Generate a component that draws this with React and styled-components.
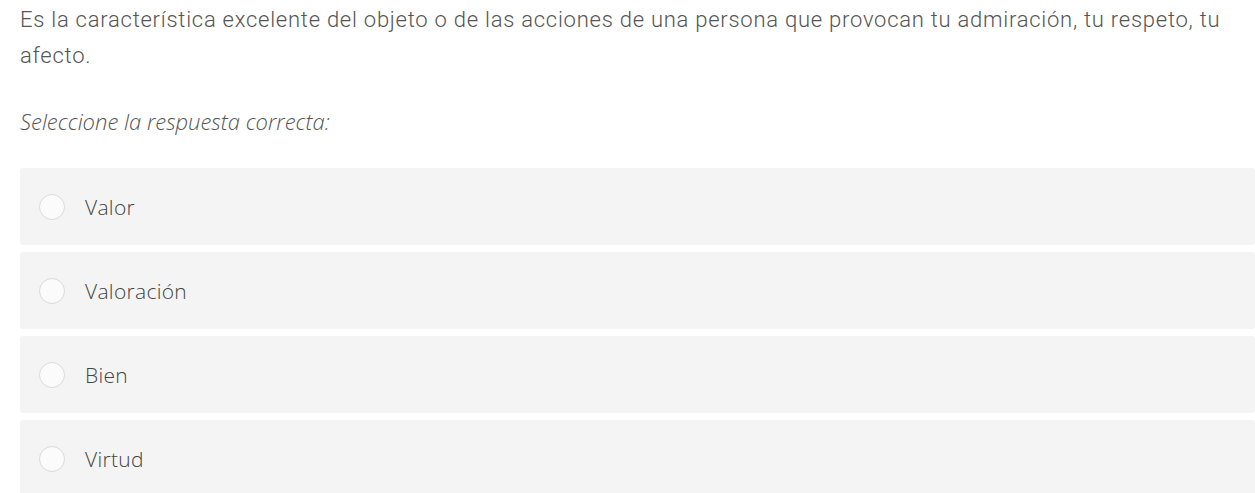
import React from 'react'
import styled, { createGlobalStyle } from 'styled-components'

const GlobalStyle = createGlobalStyle`
  body {
    margin: 0;
    background: #ffffff;
    font-family: Roboto, "Liberation Sans", sans-serif;
  }
`

const Wrapper = styled.div`
  padding: 2px 0 0 20px;
`

const Question = styled.p`
  margin: 0;
  max-width: 1225px;
  font-family: Roboto, sans-serif;
  font-weight: 300;
  font-size: 22px;
  letter-spacing: 0.75px;
  line-height: 36px;
  color: #555;
`

const Prompt = styled.p`
  margin: 32px 0 32px;
  font-family: "Open Sans", sans-serif;
  font-style: italic;
  font-weight: 300;
  font-size: 22px;
  line-height: 30px;
  color: #555;
`

const Options = styled.div`
  display: flex;
  flex-direction: column;
  gap: 7px;
`

const Option = styled.label`
  display: flex;
  align-items: center;
  height: 77px;
  padding-left: 19px;
  background: #f4f4f4;
  border-radius: 3px;
  cursor: pointer;
`

const Radio = styled.span`
  width: 26px;
  height: 26px;
  box-sizing: border-box;
  border-radius: 50%;
  border: 1px solid #dadada;
  background: #fbfbfb;
  margin-right: 20px;
  flex-shrink: 0;
`

const OptionText = styled.span`
  font-family: "Open Sans", sans-serif;
  font-weight: 300;
  font-size: 21px;
  letter-spacing: 0.3px;
  color: #444;
`

const answers = ['Valor', 'Valoración', 'Bien', 'Virtud']

export default function App() {
  return (
    <>
      <GlobalStyle />
      <Wrapper>
        <Question>
          Es la característica excelente del objeto o de las acciones de una persona que provocan tu admiración, tu respeto, tu afecto.
        </Question>
        <Prompt>Seleccione la respuesta correcta:</Prompt>
        <Options>
          {answers.map(a => (
            <Option key={a}>
              <Radio />
              <OptionText>{a}</OptionText>
            </Option>
          ))}
        </Options>
      </Wrapper>
    </>
  )
}
